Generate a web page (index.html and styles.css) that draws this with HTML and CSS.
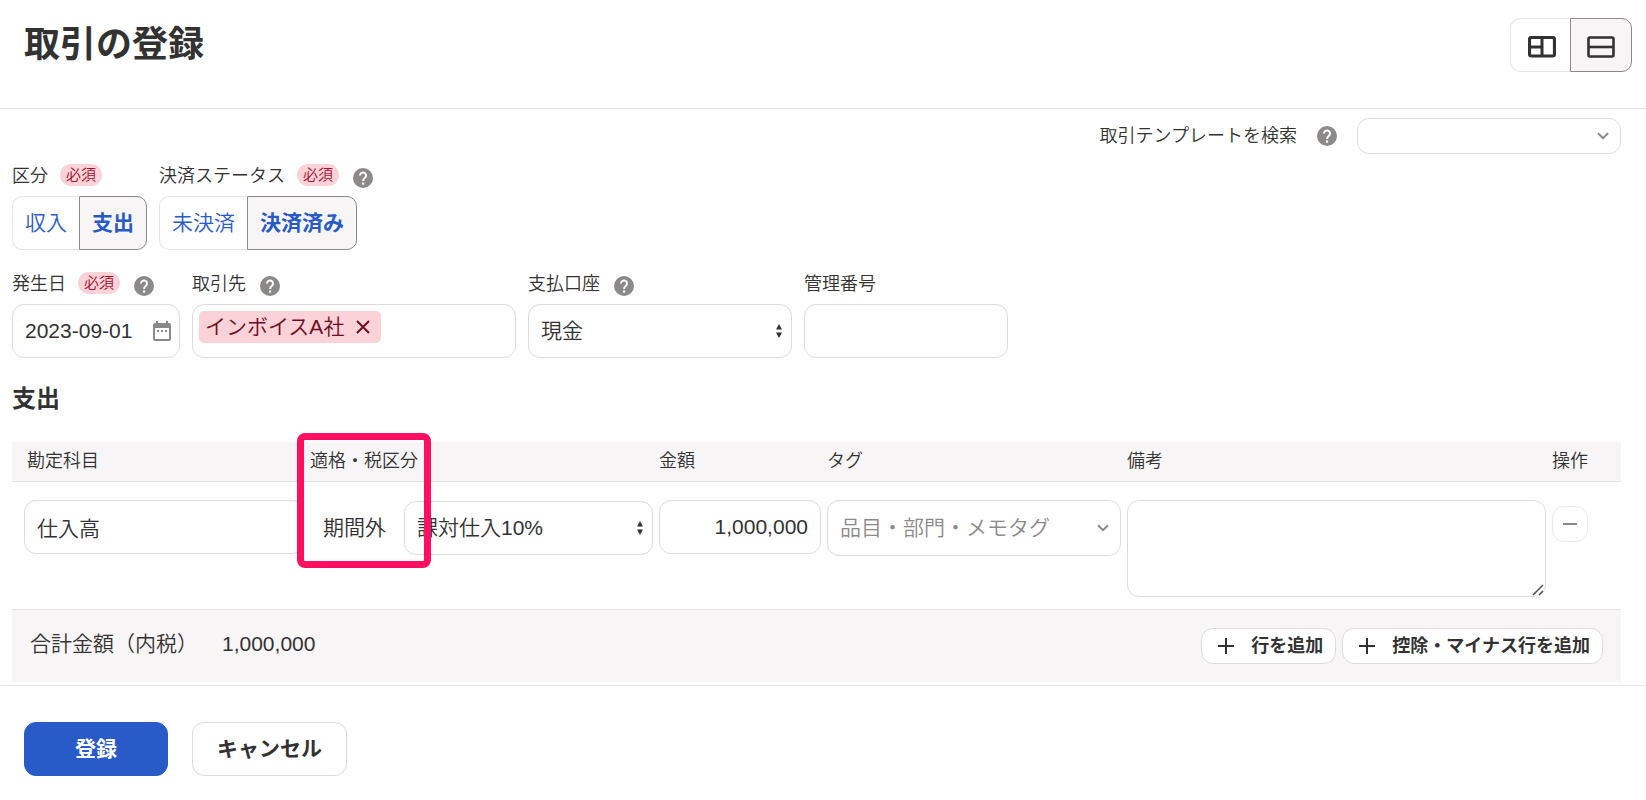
FILE: index.html
```html
<!DOCTYPE html>
<html lang="ja">
<head>
<meta charset="utf-8">
<meta name="viewport" content="width=device-width, initial-scale=1">
<title>取引の登録</title>
<link rel="stylesheet" href="styles.css">
</head>
<body>
<svg class="sprite" aria-hidden="true">
  <symbol id="help" viewBox="0 0 20 20"><circle cx="10" cy="10" r="10" fill="#8c8989"/><path d="M7 7.500a3 3 0 1 1 5.200 2c-1.200 1.100-2.100 1.700-2.100 3.500" fill="none" stroke="#fff" stroke-width="2"/><rect x="9" y="14.500" width="2.200" height="2.200" fill="#fff"/></symbol>
  <symbol id="updown" viewBox="0 0 8 16"><path d="M4 1l3 5.500H1zM4 15l3-5.500H1z" fill="#323232"/></symbol>
  <symbol id="chevron" viewBox="0 0 12 8"><path d="M1 1.200l5 5 5-5" fill="none" stroke="#8c8989" stroke-width="2"/></symbol>
  <symbol id="plus" viewBox="0 0 18 18"><path d="M9 1v16M1 9h16" fill="none" stroke="#323232" stroke-width="2"/></symbol>
</svg>

<header class="page-header">
  <h1 class="page-title">取引の登録</h1>
  <div class="segment" role="group" aria-label="表示切替">
    <button type="button" class="segment-button view-button" aria-label="分割表示" aria-pressed="false">
      <svg width="28" height="22" viewBox="0 0 28 22"><rect x="1.500" y="1.500" width="25" height="18.500" rx="2" fill="none" stroke="#323232" stroke-width="3.200"/><path d="M14 2v18M2 11h12" stroke="#323232" stroke-width="3"/></svg>
    </button>
    <button type="button" class="segment-button view-button" aria-label="一覧表示" aria-pressed="true">
      <svg width="28" height="22" viewBox="0 0 28 22"><rect x="1.500" y="1.500" width="25" height="19" rx="1.500" fill="none" stroke="#323232" stroke-width="2.600"/><path d="M2 11h24" stroke="#323232" stroke-width="2.600"/></svg>
    </button>
  </div>
</header>

<form>
  <main class="content">
    <div class="template-row">
      <label for="template">取引テンプレートを検索</label>
      <button type="button" class="help" aria-label="テンプレートのヘルプ"><svg><use href="#help"/></svg></button>
      <div class="picker template-picker">
        <select id="template" class="control control-small"><option></option></select>
        <svg class="picker-chevron"><use href="#chevron"/></svg>
      </div>
    </div>

    <div class="field-row">
      <div class="field">
        <div class="field-label"><span id="kind-label">区分</span><span class="badge">必須</span></div>
        <div class="segment" role="group" aria-labelledby="kind-label">
          <button type="button" class="segment-button" aria-pressed="false">収入</button>
          <button type="button" class="segment-button" aria-pressed="true">支出</button>
        </div>
      </div>
      <div class="field">
        <div class="field-label"><span id="status-label">決済ステータス</span><span class="badge">必須</span><button type="button" class="help" aria-label="決済ステータスのヘルプ"><svg><use href="#help"/></svg></button></div>
        <div class="segment" role="group" aria-labelledby="status-label">
          <button type="button" class="segment-button" aria-pressed="false">未決済</button>
          <button type="button" class="segment-button" aria-pressed="true">決済済み</button>
        </div>
      </div>
    </div>

    <div class="field-row">
      <div class="field field-date">
        <div class="field-label"><label for="date">発生日</label><span class="badge">必須</span><button type="button" class="help" aria-label="発生日のヘルプ"><svg><use href="#help"/></svg></button></div>
        <div class="picker">
          <input id="date" class="control" type="text" value="2023-09-01">
          <svg class="picker-calendar" viewBox="0 0 18 20"><path d="M3 0h2v2h8V0h2v2h1a2 2 0 0 1 2 2v14a2 2 0 0 1-2 2H2a2 2 0 0 1-2-2V4a2 2 0 0 1 2-2h1zM2 7v11h14V7z" fill="#8c8989" fill-rule="evenodd"/><path d="M4 9h2v2H4zM8 9h2v2H8zM12 9h2v2h-2z" fill="#8c8989"/></svg>
        </div>
      </div>
      <div class="field field-partner">
        <div class="field-label"><label for="partner">取引先</label><button type="button" class="help" aria-label="取引先のヘルプ"><svg><use href="#help"/></svg></button></div>
        <div class="control token-box">
          <span class="token">インボイスA社<button type="button" class="token-remove" aria-label="インボイスA社を削除"><svg width="14" height="14" viewBox="0 0 14 14"><path d="M1 1l12 12M13 1L1 13" stroke="#6e0f1e" stroke-width="2"/></svg></button></span>
          <input id="partner" class="token-input" type="text">
        </div>
      </div>
      <div class="field field-account">
        <div class="field-label"><label for="account">支払口座</label><button type="button" class="help" aria-label="支払口座のヘルプ"><svg><use href="#help"/></svg></button></div>
        <div class="picker">
          <select id="account" class="control"><option>現金</option></select>
          <svg class="picker-updown"><use href="#updown"/></svg>
        </div>
      </div>
      <div class="field field-number">
        <div class="field-label"><label for="number">管理番号</label></div>
        <input id="number" class="control" type="text">
      </div>
    </div>

    <h2 class="section-title">支出</h2>
    <table class="lines">
      <colgroup><col class="col-item"><col class="col-tax"><col class="col-amount"><col class="col-tag"><col><col class="col-action"></colgroup>
      <thead>
        <tr><th scope="col">勘定科目</th><th scope="col">適格・税区分</th><th scope="col">金額</th><th scope="col">タグ</th><th scope="col">備考</th><th scope="col">操作</th></tr>
      </thead>
      <tbody>
        <tr>
          <td><input class="control" type="text" value="仕入高" aria-label="勘定科目"></td>
          <td class="tax-cell">
            <div class="tax">
              <span>期間外</span>
              <div class="picker">
                <select class="control" aria-label="税区分"><option>課対仕入10%</option></select>
                <svg class="picker-updown"><use href="#updown"/></svg>
              </div>
            </div>
            <div class="highlight"></div>
          </td>
          <td><input class="control control-amount" type="text" value="1,000,000" aria-label="金額"></td>
          <td>
            <div class="picker">
              <input class="control control-tag" type="text" placeholder="品目・部門・メモタグ" aria-label="タグ">
              <svg class="picker-chevron"><use href="#chevron"/></svg>
            </div>
          </td>
          <td>
            <div class="picker">
              <textarea class="control control-note" aria-label="備考"></textarea>
              <svg class="note-grip" width="12" height="12" viewBox="0 0 12 12"><path d="M1 11L11 1M7 11l4-4" stroke="#505050" stroke-width="1.500"/></svg>
            </div>
          </td>
          <td><button type="button" class="remove-line" aria-label="行を削除"><svg width="14" height="2" viewBox="0 0 14 2"><path d="M0 1h14" stroke="#8c8989" stroke-width="2"/></svg></button></td>
        </tr>
      </tbody>
    </table>
    <div class="total">
      <span>合計金額（内税）</span>
      <span class="total-value">1,000,000</span>
      <div class="total-actions">
        <button type="button" class="add-button"><svg width="18" height="18"><use href="#plus"/></svg>行を追加</button>
        <button type="button" class="add-button"><svg width="18" height="18"><use href="#plus"/></svg>控除・マイナス行を追加</button>
      </div>
    </div>
  </main>

  <footer class="form-actions">
    <button type="submit" class="button button-primary">登録</button>
    <button type="button" class="button button-secondary">キャンセル</button>
  </footer>
</form>
</body>
</html>
```

FILE: styles.css
```css
* {
  box-sizing: border-box;
}

body {
  margin: 0;
  background: #fff;
  color: #323232;
  font-family: "Liberation Sans", "Noto Sans CJK JP", sans-serif;
  font-size: 18px;
  font-weight: 350;
  line-height: 24px;
}

button,
input,
select,
textarea {
  margin: 0;
  color: inherit;
  font: inherit;
}

button {
  cursor: pointer;
}

.sprite {
  position: absolute;
  width: 0;
  height: 0;
}

.page-header {
  display: flex;
  align-items: flex-start;
  justify-content: space-between;
  padding: 18px 14px 36px 24px;
  border-bottom: 1px solid #e6e4e4;
}

.page-title {
  margin: 0;
  font-size: 36px;
  font-weight: 700;
  line-height: 54px;
}

.content {
  padding: 9px 25px 3px 12px;
}

/* Segmented buttons */
.segment {
  display: flex;
}

.segment-button {
  height: 54px;
  padding: 0 12px;
  border: 1px solid #e6e4e4;
  border-right: 0;
  border-radius: 10px 0 0 10px;
  background: #fff;
  color: #285ac8;
  font-size: 21px;
}

.segment-button[aria-pressed="true"] {
  border: 1px solid #8c8989;
  border-radius: 0 10px 10px 0;
  background: #f7f5f5;
  font-weight: 700;
}

.view-button {
  display: flex;
  align-items: center;
  padding: 3px 16px 0;
}

.view-button[aria-pressed="false"] {
  padding: 3px 14px 0 17px;
}

/* Fields */
.template-row {
  display: flex;
  align-items: center;
  justify-content: flex-end;
  gap: 20px;
  margin-bottom: 10px;
}

.template-picker {
  width: 264px;
}

.field-row {
  display: flex;
  gap: 12px;
  margin-bottom: 22px;
}

.field-label {
  display: flex;
  align-items: flex-end;
  height: 24px;
  margin-bottom: 8px;
  white-space: nowrap;
}

.field-date {
  width: 168px;
}

.field-partner {
  width: 324px;
}

.field-account {
  width: 264px;
}

.field-number {
  width: 204px;
}

.badge {
  align-self: flex-start;
  margin-left: 12px;
  padding: 0 6px;
  border-radius: 11px;
  background: #fad2d7;
  color: #a50f2d;
  font-size: 15px;
  line-height: 22px;
}

.help {
  width: 20px;
  height: 20px;
  padding: 0;
  border: 0;
  background: none;
}

.help svg {
  display: block;
  width: 20px;
  height: 20px;
}

.field-label .help {
  margin-left: 14px;
}

.control {
  display: block;
  width: 100%;
  height: 54px;
  padding: 0 12px;
  border: 1px solid #dcdcdc;
  border-radius: 12px;
  outline: 0;
  background: #fff;
  font-size: 21px;
  appearance: none;
}

input.control {
  border-color: #e1dcd7;
}

.control::placeholder {
  color: #8c8989;
  opacity: 1;
}

.control-small {
  height: 36px;
  border-color: #e1dcd7;
}

.control-amount {
  text-align: right;
}

input.control-tag {
  height: 56px;
  border-color: #dcdcdc;
}

.control-note {
  height: 97px;
  resize: vertical;
}

.control-note::-webkit-resizer {
  background: none;
}

.picker {
  display: grid;
  align-items: center;
}

.picker > * {
  grid-area: 1 / 1;
}

.picker > svg {
  justify-self: end;
  pointer-events: none;
}

.picker-chevron {
  width: 12px;
  height: 8px;
  margin-right: 12px;
}

.picker-updown {
  width: 8px;
  height: 16px;
  margin-right: 9px;
}

.picker-calendar {
  width: 18px;
  height: 20px;
  margin-right: 9px;
}

.note-grip {
  align-self: end;
  margin: 0 2px 1px 0;
}

.token-box {
  display: flex;
  align-items: flex-start;
  padding: 6px;
}

.token {
  display: flex;
  align-items: center;
  gap: 12px;
  padding: 0 11px 0 6px;
  border-radius: 5px;
  background: #fad2d7;
  color: #6e0f1e;
  line-height: 32px;
  white-space: nowrap;
}

.token-remove {
  display: flex;
  padding: 0;
  border: 0;
  background: none;
}

.token-input {
  flex: 1;
  min-width: 0;
  height: 32px;
  border: 0;
  outline: 0;
  background: none;
}

/* Line items */
.section-title {
  margin: 0 0 24px;
  font-size: 24px;
  font-weight: 700;
  line-height: 38px;
}

.lines {
  width: 100%;
  border-collapse: separate;
  border-spacing: 0;
  table-layout: fixed;
}

.col-item {
  width: 295px;
}

.col-tax {
  width: 349px;
}

.col-amount {
  width: 168px;
}

.col-tag {
  width: 300px;
}

.col-action {
  width: 72px;
}

.lines th {
  padding: 7px 3px 8px;
  border-bottom: 1px solid #e6e4e4;
  background: #f7f5f5;
  font-weight: 350;
  text-align: left;
}

.lines th:first-child {
  padding-left: 15px;
}

.lines td {
  padding: 18px 3px 12px;
  vertical-align: top;
}

.lines td:first-child {
  padding-left: 12px;
}

.tax-cell {
  position: relative;
}

.tax {
  display: flex;
  align-items: center;
  gap: 18px;
  padding: 1px 0 0 13px;
  font-size: 21px;
  white-space: nowrap;
}

.tax .picker {
  flex: 1;
}

.highlight {
  position: absolute;
  top: -49px;
  left: -10px;
  width: 134px;
  height: 135px;
  border: 7px solid #ff0f5f;
  border-radius: 8px;
  pointer-events: none;
}

.remove-line {
  display: flex;
  align-items: center;
  justify-content: center;
  width: 36px;
  height: 36px;
  margin-top: 6px;
  border: 1px solid #ebe9e9;
  border-radius: 12px;
  background: #fff;
}

.total {
  display: flex;
  align-items: flex-start;
  padding: 18px;
  border-top: 1px solid #e6e4e4;
  background: #f7f5f5;
  font-size: 21px;
  line-height: 32px;
}

.total-value {
  margin-left: 24px;
}

.total-actions {
  display: flex;
  gap: 6px;
  margin-left: auto;
}

.add-button {
  display: flex;
  align-items: center;
  gap: 16px;
  height: 36px;
  padding: 0 12px 0 15px;
  border: 1px solid #dcdcdc;
  border-radius: 12px;
  background: #fff;
  font-size: 18px;
  font-weight: 700;
}

.form-actions {
  display: flex;
  gap: 24px;
  padding: 36px 24px;
  border-top: 1px solid #e6e4e4;
}

.button {
  height: 54px;
  padding: 0 24px;
  border: 1px solid #dcdcdc;
  border-radius: 12px;
  background: #fff;
  font-size: 21px;
  font-weight: 700;
}

.button-primary {
  width: 144px;
  border-color: #285ac8;
  background: #285ac8;
  color: #fff;
}
```
